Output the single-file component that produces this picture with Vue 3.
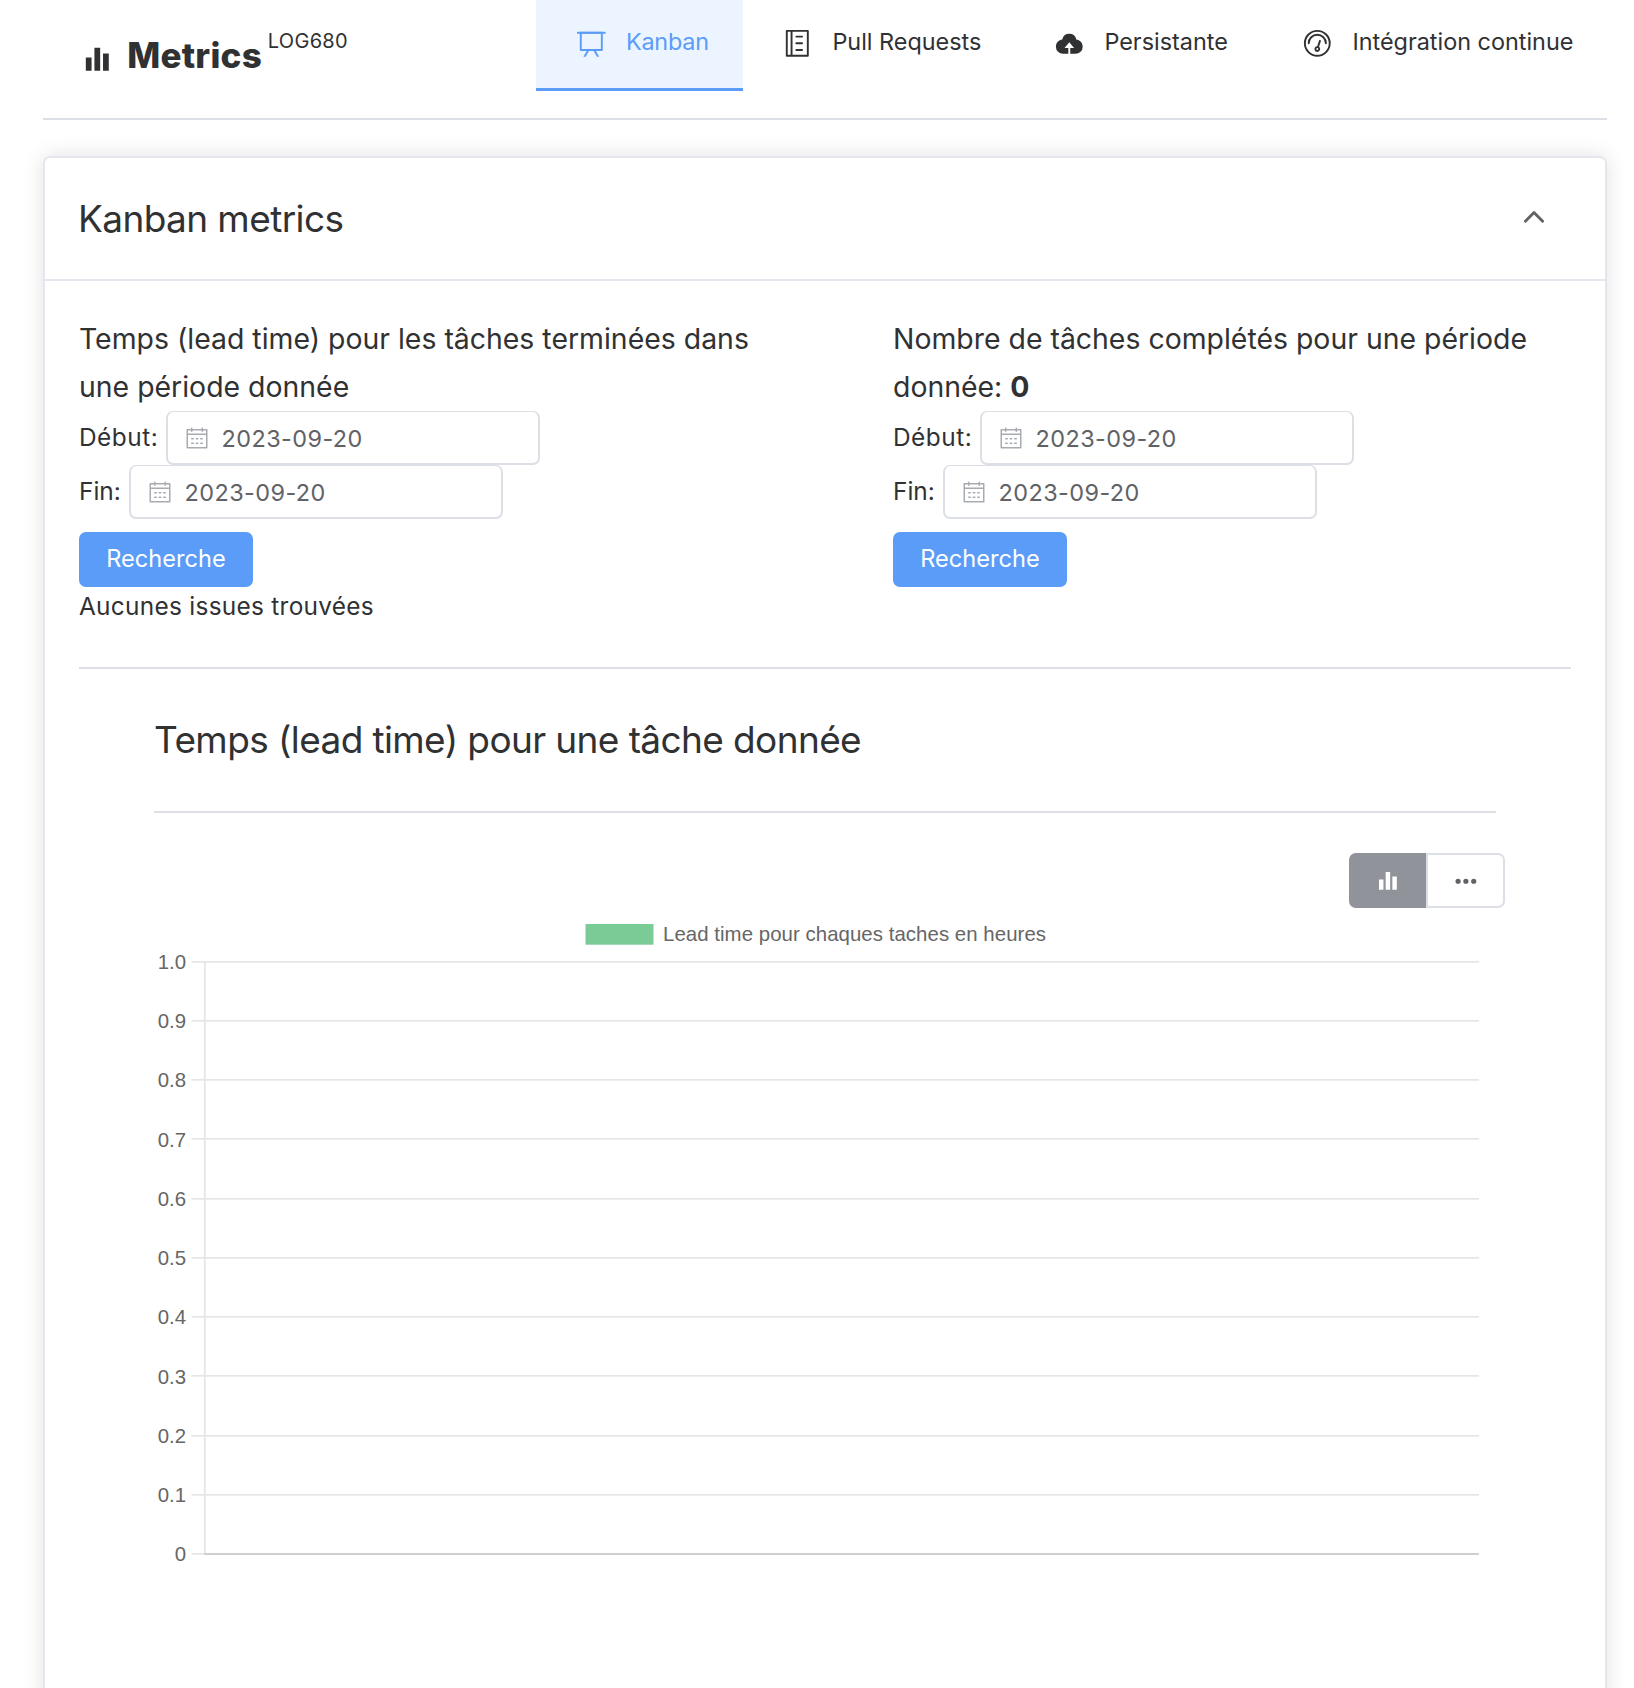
<script setup>
const icons = {
  histogram: ['M416 896V128h192v768zm-288 0V448h192v448zm576 0V320h192v576z'],
  board: [
    'M32 128h960v64H32z',
    'M192 192v512h640V192zm-64-64h768v608a32 32 0 0 1-32 32H160a32 32 0 0 1-32-32z',
    'M322.176 960H248.32l144.64-250.56 55.424 32zm453.888 0h-73.856L576 741.44l55.424-32z'
  ],
  memo: [
    'M480 320h192a32 32 0 0 0 0-64H480a32 32 0 0 0 0 64m0 224h192a32 32 0 0 0 0-64H480a32 32 0 0 0 0 64m0 224h192a32 32 0 0 0 0-64H480a32 32 0 0 0 0 64',
    'M864 64H160a32 32 0 0 0-32 32v832a32 32 0 0 0 32 32h704a32 32 0 0 0 32-32V96a32 32 0 0 0-32-32M192 896V128h96v768zm640 0H352V128h480z'
  ],
  upload: ['M544 864V672h128L512 480 352 672h128v192H320v-1.6c-5.376.32-10.496 1.6-16 1.6A240 240 0 0 1 64 624c0-123.136 93.12-223.488 212.608-237.248A239.808 239.808 0 0 1 512 192a239.872 239.872 0 0 1 235.456 194.752c119.488 13.76 212.48 114.112 212.48 237.248a240 240 0 0 1-240 240c-5.376 0-10.56-1.28-16-1.6v1.6z'],
  odometer: [
    'M512 896a384 384 0 1 0 0-768 384 384 0 0 0 0 768m0 64a448 448 0 1 1 0-896 448 448 0 0 1 0 896',
    'M192 512a320 320 0 1 1 640 0 32 32 0 1 1-64 0 256 256 0 1 0-512 0 32 32 0 0 1-64 0',
    'M570.432 627.84A96 96 0 1 1 509.568 608l60.992-187.776A32 32 0 1 1 631.424 440zM502.08 734.464a32 32 0 1 0 19.84-60.928 32 32 0 0 0-19.84 60.928'
  ],
  calendar: ['M128 384v512h768V192H768v32a32 32 0 1 1-64 0v-32H320v32a32 32 0 0 1-64 0v-32H128v128h768v64zm192-256h384V96a32 32 0 1 1 64 0v32h160a32 32 0 0 1 32 32v768a32 32 0 0 1-32 32H96a32 32 0 0 1-32-32V160a32 32 0 0 1 32-32h160V96a32 32 0 0 1 64 0zm-32 384h64a32 32 0 0 1 0 64h-64a32 32 0 0 1 0-64m0 192h64a32 32 0 1 1 0 64h-64a32 32 0 1 1 0-64m192-192h64a32 32 0 0 1 0 64h-64a32 32 0 0 1 0-64m0 192h64a32 32 0 1 1 0 64h-64a32 32 0 1 1 0-64m192-192h64a32 32 0 1 1 0 64h-64a32 32 0 1 1 0-64m0 192h64a32 32 0 1 1 0 64h-64a32 32 0 1 1 0-64'],
  more: ['M176 416a112 112 0 1 1 0 224 112 112 0 0 1 0-224m336 0a112 112 0 1 1 0 224 112 112 0 0 1 0-224m336 0a112 112 0 1 1 0 224 112 112 0 0 1 0-224']
}

const tabs = [
  { label: 'Kanban', icon: 'board', key: 'kanban', active: true },
  { label: 'Pull Requests', icon: 'memo', key: 'pulls' },
  { label: 'Persistante', icon: 'upload', key: 'persist' },
  { label: 'Intégration continue', icon: 'odometer', key: 'ci' }
]

const periods = [
  { title: 'Temps (lead time) pour les tâches terminées dans une période donnée', result: 'Aucunes issues trouvées' },
  { title: 'Nombre de tâches complétés pour une période donnée:', count: '0' }
]
const fields = [
  { label: 'Début:', key: 'start', value: '2023-09-20' },
  { label: 'Fin:', key: 'end', value: '2023-09-20' }
]

const ticks = Array.from({ length: 11 }, (_, i) => ({
  label: i === 0 ? '1.0' : i === 10 ? '0' : (1 - i / 10).toFixed(1),
  y: 53.7 + i * 59.23
}))
</script>

<template>
  <div class="page">
    <header class="topbar">
      <div class="brand">
        <svg class="icon brand-icon" viewBox="0 0 1024 1024"><path v-for="d in icons.histogram" :key="d" :d="d" /></svg>
        <span class="brand-name">Metrics</span>
        <span class="brand-tag">LOG680</span>
      </div>
      <nav class="tabs">
        <a v-for="t in tabs" :key="t.key" class="tab" :class="[t.key, { active: t.active }]">
          <svg class="icon" viewBox="0 0 1024 1024"><path v-for="d in icons[t.icon]" :key="d" :d="d" /></svg>
          <span>{{ t.label }}</span>
        </a>
      </nav>
    </header>

    <main class="card">
      <div class="card-head">
        <h1>Kanban metrics</h1>
        <svg class="chevron" viewBox="0 0 22 14"><path d="M2.4 11.2 11 2.4l8.6 8.8" /></svg>
      </div>
      <div class="card-body">
        <div class="periods">
          <section v-for="p in periods" :key="p.title">
            <h2>{{ p.title }} <b v-if="p.count">{{ p.count }}</b></h2>
            <div v-for="f in fields" :key="f.key" class="field">
              <label :class="f.key">{{ f.label }}</label>
              <div class="input">
                <svg viewBox="0 0 1024 1024"><path v-for="d in icons.calendar" :key="d" :d="d" /></svg>
                <span>{{ f.value }}</span>
              </div>
            </div>
            <button class="search">Recherche</button>
            <p v-if="p.result" class="result">{{ p.result }}</p>
          </section>
        </div>
        <div class="rule"></div>
        <section class="lead">
          <h3>Temps (lead time) pour une tâche donnée</h3>
          <div class="rule"></div>
          <div class="toggle">
            <button class="on"><svg viewBox="0 0 1024 1024"><path v-for="d in icons.histogram" :key="d" :d="d" /></svg></button>
            <button><svg viewBox="0 0 1024 1024"><path v-for="d in icons.more" :key="d" :d="d" /></svg></button>
          </div>
          <svg class="chart" width="1342" height="720" viewBox="0 0 1342 720">
            <rect x="431.5" y="16" width="68" height="20.7" fill="#7bcb96" />
            <text x="509" y="33" textLength="383">Lead time pour chaques taches en heures</text>
            <g v-for="(t, i) in ticks" :key="t.label">
              <rect :x="37.5" :y="Math.round(t.y) - 1" width="1287.5" height="1.7" fill="#e5e5e5" />
              <rect v-if="i === 10" x="50" :y="Math.round(t.y) - 1" width="1275" height="2" fill="#cfcfcf" />
              <text x="32" :y="t.y + 7.3" text-anchor="end">{{ t.label }}</text>
            </g>
            <rect x="50" y="53" width="1.7" height="592" fill="#e5e5e5" />
          </svg>
        </section>
      </div>
    </main>
  </div>
</template>

<style scoped>
.page {
  box-sizing: border-box;
  height: 1688px;
  padding: 0 27px 0 43px;
  overflow: hidden;
  background: #fff;
  color: #303133;
  font-family: Inter, "Liberation Sans", sans-serif;
}
h1, h2, h3, p { margin: 0; font-weight: 400; }
button { border: 0; padding: 0; font: inherit; }
.topbar {
  display: flex;
  justify-content: space-between;
  height: 118px;
  border-bottom: 2px solid #dcdfe6;
}
.brand { display: flex; align-items: flex-start; padding-left: 39px; }
.icon { width: 30.6px; height: 30.6px; fill: currentColor; flex: none; }
.brand-icon { margin-top: 43.5px; }
.brand-name {
  margin: 35px 0 0 14.6px;
  font-size: 35px;
  font-weight: 800;
  line-height: 40px;
  letter-spacing: 0.25px;
}
.brand-tag { margin: 29px 0 0 5.8px; font-size: 20px; line-height: 24px; letter-spacing: 0.3px; }
.tabs { display: flex; }
.tab {
  box-sizing: border-box;
  display: flex;
  align-items: flex-start;
  gap: 19.8px;
  height: 91px;
  padding: 28px 0 0 39.5px;
  border-bottom: 3px solid transparent;
  font-size: 23.4px;
  line-height: 28px;
  white-space: nowrap;
}
.kanban { width: 207px; letter-spacing: -0.2px; }
.pulls { width: 271.5px; padding-left: 39px; }
.persist { width: 248px; }
.ci { width: 344.5px; }
.active { color: #5a9cf8; background: #ecf5ff; border-bottom-color: #5a9cf8; }
.card {
  box-sizing: border-box;
  height: 1700px;
  margin-top: 36px;
  border: 2px solid #e4e7ed;
  border-radius: 7px;
  box-shadow: 0 0 21px rgba(0, 0, 0, 0.12);
}
.card-head {
  display: flex;
  align-items: center;
  justify-content: space-between;
  height: 121px;
  padding: 0 60px 0 33px;
  border-bottom: 2px solid #e4e7ed;
}
h1 { font-size: 37px; line-height: 44px; letter-spacing: -0.6px; }
.chevron { width: 22px; height: 14px; margin-bottom: 4px; }
.chevron path { fill: none; stroke: #606266; stroke-width: 2.8; stroke-linecap: round; stroke-linejoin: round; }
.card-body { padding: 34px 34px 0; }
.periods { display: grid; grid-template-columns: 678px 678px; column-gap: 136px; height: 352px; align-content: start; }
h2 { font-size: 28.4px; line-height: 48px; letter-spacing: 0.01px; }
.field { display: flex; height: 54px; font-size: 24.4px; }
label { line-height: 52px; letter-spacing: 0.5px; }
.start { width: 87px; }
.end { width: 50px; letter-spacing: 0; }
.input {
  box-sizing: border-box;
  display: flex;
  align-items: center;
  gap: 12.5px;
  width: 374px;
  padding-left: 17px;
  border: 2px solid #dcdfe6;
  border-top-width: 1px;
  border-radius: 7px;
  color: #606266;
  font-size: 23.4px;
  letter-spacing: 0.45px;
}
.input span { padding-top: 2px; }
.input svg { width: 24px; height: 24px; fill: #a8abb2; }
.search {
  display: block;
  width: 174px;
  height: 55px;
  margin-top: 13px;
  padding-bottom: 2px;
  border-radius: 7px;
  background: #5a9cf8;
  color: #fff;
  font-size: 23.6px;
}
.result { padding-top: 1px; font-size: 24.4px; line-height: 36px; letter-spacing: 0.29px; }
.rule { height: 2px; background: #dcdfe6; }
.lead { margin: 0 75px; }
h3 { padding: 49px 0 49px; font-size: 37px; line-height: 44px; letter-spacing: -0.61px; }
.toggle {
  box-sizing: border-box;
  display: flex;
  width: 156px;
  height: 55px;
  margin: 40px -9px 0 auto;
  border: 2px solid #dcdfe6;
  border-left: 0;
  border-radius: 7px;
}
.toggle button { display: flex; align-items: center; justify-content: center; flex: 1; background: none; color: #606266; }
.toggle .on { box-sizing: border-box; flex: none; width: 79px; height: 55px; margin-top: -2px; border-right: 2px solid #dcdfe6; border-radius: 7px 0 0 7px; background: #909399; color: #fff; }
.toggle svg { width: 23.8px; height: 23.8px; fill: currentColor; }
.chart { display: block; font-family: "Liberation Sans", sans-serif; font-size: 20.4px; }
.chart text { fill: #666; }
</style>
